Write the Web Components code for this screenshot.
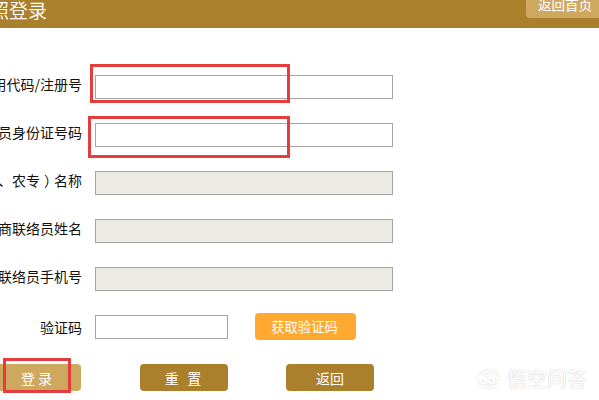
<!DOCTYPE html>
<html lang="zh-CN">
<head>
<meta charset="utf-8">
<title>登录</title>
<style>
    html, body {
        margin: 0;
        width: 599px;
        height: 400px;
        overflow: hidden;
        background: #fff;
    }
</style>
</head>
<body>
<login-page></login-page>
<script>
class PageHeader extends HTMLElement {
    constructor() {
        super();
        this.attachShadow({ mode: 'open' });
        this.shadowRoot.innerHTML = `
            <style>
                :host {
                    display: flex;
                    justify-content: space-between;
                    align-items: flex-start;
                    height: 28px;
                    background: #aa802c;
                    color: #fff;
                    overflow: hidden;
                }
                .title {
                    width: 47px;
                    height: 22px;
                    display: flex;
                    justify-content: flex-end;
                    white-space: nowrap;
                    font-size: 19px;
                    line-height: 19px;
                    font-weight: 350;
                }
                .home {
                    width: 73px;
                    height: 18px;
                    box-sizing: border-box;
                    padding-left: 12px;
                    border-radius: 0 0 0 4px;
                    background: #cfa85f;
                    font-size: 13.5px;
                    line-height: 8px;
                    white-space: nowrap;
                }
            </style>
            <div class="title"><slot></slot></div>
            <div class="home"><slot name="home"></slot></div>
        `;
    }
}

class FormRow extends HTMLElement {
    constructor() {
        super();
        this.attachShadow({ mode: 'open' });
        this.shadowRoot.innerHTML = `
            <style>
                :host {
                    display: flex;
                    height: 24px;
                    margin-bottom: 24px;
                }
                .label {
                    flex: none;
                    width: 82px;
                    margin-right: 13px;
                    display: flex;
                    justify-content: flex-end;
                    white-space: nowrap;
                    font-size: 14px;
                    line-height: 18px;
                    color: #111;
                }
                :host([captcha]) .label {
                    line-height: 24px;
                }
            </style>
            <div class="label"><slot name="label"></slot></div>
            <slot></slot>
        `;
    }
}

class TextField extends HTMLElement {
    constructor() {
        super();
        this.attachShadow({ mode: 'open' });
        this.shadowRoot.innerHTML = `
            <style>
                :host {
                    display: block;
                    position: relative;
                    box-sizing: border-box;
                    width: 298px;
                    height: 24px;
                    border: 1px solid #a5a5a5;
                    background: #fff;
                }
                :host([disabled]) {
                    background: #ebebe4;
                }
                :host([short]) {
                    width: 133px;
                }
            </style>
            <slot></slot>
        `;
    }
}

class ActionButton extends HTMLElement {
    constructor() {
        super();
        this.attachShadow({ mode: 'open' });
        this.shadowRoot.innerHTML = `
            <style>
                :host {
                    display: block;
                    position: relative;
                    box-sizing: border-box;
                    flex: none;
                    width: 88px;
                    height: 27px;
                    border-radius: 4px;
                    background: #aa802c;
                    color: #fff;
                    font-size: 14px;
                    line-height: 29px;
                    text-align: center;
                }
                :host([kind="light"]) {
                    padding-right: 1px;
                    background: #cfa85f;
                }
                :host([kind="orange"]) {
                    width: 101px;
                    margin: -2px 0 0 27px;
                    padding-right: 2px;
                    background: #ffa930;
                    font-size: 13.3px;
                    line-height: 27px;
                }
                slot {
                    white-space: pre;
                }
            </style>
            <slot></slot>
        `;
    }
}

/* red outline drawn over the control it is placed in */
class MarkBox extends HTMLElement {
    constructor() {
        super();
        this.attachShadow({ mode: 'open' });
        this.shadowRoot.innerHTML = `
            <style>
                :host {
                    position: absolute;
                    box-sizing: border-box;
                    border: 3px solid #e53d3d;
                }
            </style>
        `;
    }
}

class WaterMark extends HTMLElement {
    constructor() {
        super();
        this.attachShadow({ mode: 'open' });
        this.shadowRoot.innerHTML = `
            <style>
                :host {
                    position: absolute;
                    left: 476px;
                    top: 367px;
                    display: flex;
                    align-items: center;
                    gap: 6px;
                    color: #fff;
                    font-size: 20px;
                    line-height: 24px;
                    text-shadow: 0 0 1px #c8c8c8, 0 0 2px #e4e4e4;
                }
                svg {
                    filter: drop-shadow(0 0 1px #d8d8d8);
                }
            </style>
            <svg width="25" height="20" viewBox="0 0 25 20">
                <path d="M3 7Q5 1 12.5 1T22 7L22 9H3Z" fill="#f7f7f7"/>
                <path d="M1 10C5 6 8 8 12 12S18 15 18 11S13 8 11 12S5 15 4 12S8 9 10 11M14 8C18 6 21 8 24 10M3 16Q12 20 22 16" fill="none" stroke="#fff" stroke-width="2"/>
            </svg>
            <span>悟空问答</span>
        `;
    }
}

class LoginPage extends HTMLElement {
    constructor() {
        super();
        this.attachShadow({ mode: 'open' });
        this.shadowRoot.innerHTML = `
            <style>
                :host {
                    display: block;
                    position: relative;
                    width: 599px;
                    height: 400px;
                    overflow: hidden;
                    background: #fff;
                    font-family: "Noto Sans CJK SC", sans-serif;
                }
                .form {
                    padding-top: 47px;
                }
                .actions {
                    display: flex;
                    gap: 58px;
                    margin: 25px 0 0 -7px;
                }
                .actions action-button:nth-child(2) {
                    margin-left: 1px;
                    padding-right: 2px;
                    word-spacing: 1px;
                }
                .paren {
                    margin: 0 3px 0 4px;
                    font-feature-settings: "halt";
                }
                .code-mark {
                    left: -6px;
                    top: -12px;
                    width: 200px;
                    height: 39px;
                }
                .id-mark {
                    left: -8px;
                    top: -8px;
                    width: 202px;
                    height: 42px;
                }
                .login-mark {
                    left: 10px;
                    top: -6px;
                    width: 68px;
                    height: 35px;
                }
            </style>
            <page-header>照登录<span slot="home">返回首页</span></page-header>
            <div class="form">
                <form-row><span slot="label">用代码/注册号</span><text-field><mark-box class="code-mark"></mark-box></text-field></form-row>
                <form-row><span slot="label">员身份证号码</span><text-field><mark-box class="id-mark"></mark-box></text-field></form-row>
                <form-row><span slot="label">、农专<span class="paren">）</span>名称</span><text-field disabled></text-field></form-row>
                <form-row><span slot="label">商联络员姓名</span><text-field disabled></text-field></form-row>
                <form-row><span slot="label">联络员手机号</span><text-field disabled></text-field></form-row>
                <form-row captcha>
                    <span slot="label">验证码</span>
                    <text-field short></text-field>
                    <action-button kind="orange">获取验证码</action-button>
                </form-row>
            </div>
            <div class="actions">
                <action-button kind="light">登 录<mark-box class="login-mark"></mark-box></action-button>
                <action-button>重  置</action-button>
                <action-button>返回</action-button>
            </div>
            <water-mark></water-mark>
        `;
    }
}

customElements.define('page-header', PageHeader);
customElements.define('form-row', FormRow);
customElements.define('text-field', TextField);
customElements.define('action-button', ActionButton);
customElements.define('mark-box', MarkBox);
customElements.define('water-mark', WaterMark);
customElements.define('login-page', LoginPage);
</script>
</body>
</html>
